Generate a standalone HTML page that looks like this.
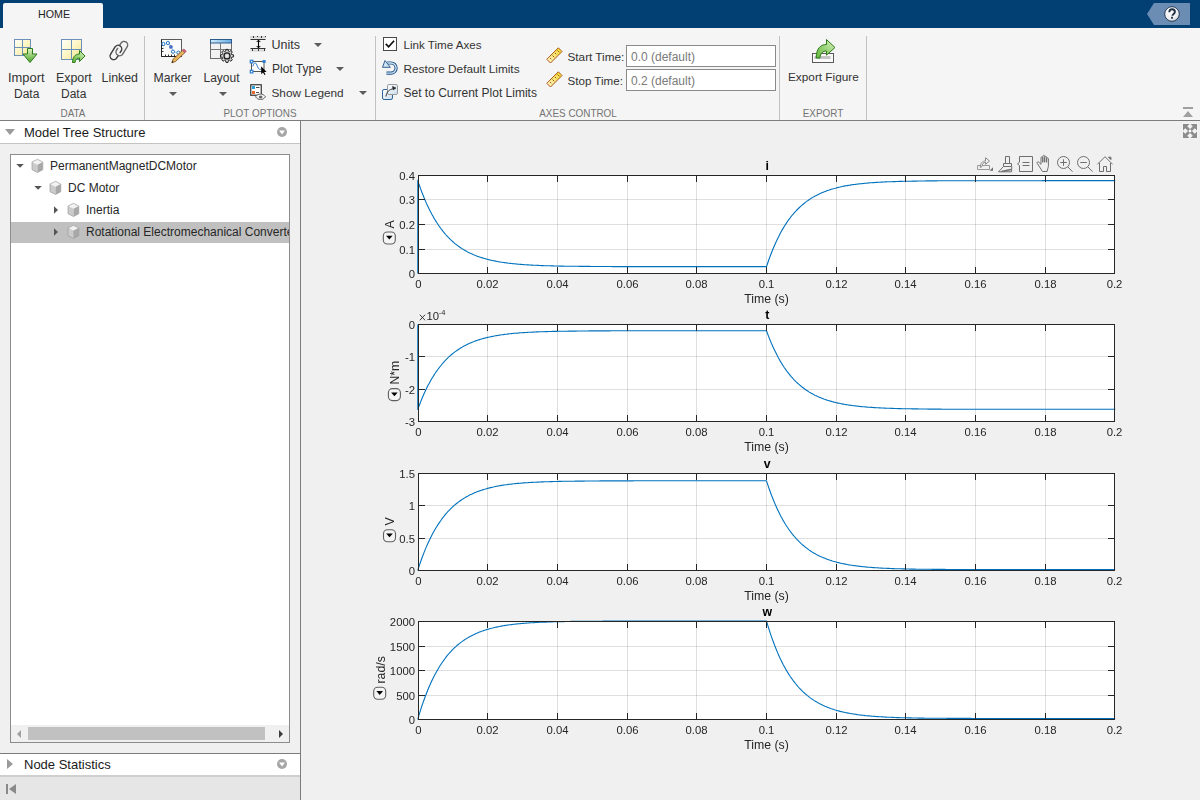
<!DOCTYPE html>
<html><head><meta charset="utf-8">
<style>
*{box-sizing:border-box}
html,body{margin:0;padding:0}
body{width:1200px;height:800px;overflow:hidden;position:relative;background:#f0f0f0;font-family:"Liberation Sans",sans-serif;color:#1a1a1a}
.a{position:absolute}
.t{position:absolute;white-space:nowrap;line-height:1}
#topbar{left:0;top:0;width:1200px;height:28px;background:#023f73}
#tab{left:3px;top:3px;width:100px;height:25px;background:#f5f5f5;border-radius:2px 2px 0 0}
#ribbon{left:0;top:28px;width:1200px;height:92px;background:#f5f5f5}
#ribline{left:0;top:120px;width:1200px;height:1px;background:#7c7c7c}
.sep{position:absolute;top:36px;width:1px;height:84px;background:#c2c2c2}
.rt{font-size:12px;color:#333}
.gl{font-size:11px;color:#737373;transform:translateX(-50%) scaleX(0.9)}
.dd{position:absolute;width:0;height:0;border-left:4px solid transparent;border-right:4px solid transparent;border-top:4px solid #5c5c5c}
svg text{font-family:"Liberation Sans",sans-serif}
.tl{font-size:11.3px;fill:#262626}
.xl{font-size:12.3px;fill:#262626}
.tt{font-size:12.3px;font-weight:bold;fill:#000}
</style></head><body>
<div class="a" id="topbar"></div>
<div class="a" id="tab"></div>
<div class="t" style="left:38px;top:9px;font-size:11px;color:#222;transform:scaleX(0.97);transform-origin:0 0">HOME</div>
<!-- help -->
<svg class="a" style="left:1140px;top:0" width="60" height="28">
 <defs><radialGradient id="hg" cx="0.4" cy="0.3" r="0.8"><stop offset="0" stop-color="#ffffff"/><stop offset="0.7" stop-color="#e9ecef"/><stop offset="1" stop-color="#aab4bf"/></radialGradient></defs>
 <path d="M7 14L14 3H50V25H14Z" fill="#6b8db3"/>
 <circle cx="32" cy="14" r="7.3" fill="url(#hg)" stroke="#1d3148" stroke-width="0.9"/>
 <path d="M29.3 12.2c0-1.9 1.2-3 2.8-3s2.8 1 2.8 2.6c0 1.2-.7 1.8-1.5 2.4-.6.4-.9.8-.9 1.6" fill="none" stroke="#1f2f45" stroke-width="1.9"/>
 <rect x="31.1" y="16.8" width="1.9" height="1.9" fill="#1f2f45"/>
</svg>
<div class="a" id="ribbon"></div>
<div class="a" id="ribline"></div>
<div class="sep" style="left:144px"></div>
<div class="sep" style="left:375px"></div>
<div class="sep" style="left:779px"></div>
<div class="sep" style="left:866px"></div>

<!-- DATA group -->
<svg class="a" style="left:0;top:0" width="1200" height="120">
 <defs>
  <linearGradient id="yel" x1="0" y1="0" x2="1" y2="1"><stop offset="0" stop-color="#ffffff"/><stop offset="0.5" stop-color="#fdf6c4"/><stop offset="1" stop-color="#f5e48a"/></linearGradient>
  <linearGradient id="grn" x1="0" y1="0" x2="0" y2="1"><stop offset="0" stop-color="#e2f5c8"/><stop offset="1" stop-color="#4aa526"/></linearGradient>
  <linearGradient id="grn2" x1="0" y1="1" x2="1" y2="0"><stop offset="0" stop-color="#5fb636"/><stop offset="1" stop-color="#d9f2c0"/></linearGradient>
  <linearGradient id="hdr" x1="0" y1="0" x2="1" y2="0"><stop offset="0" stop-color="#d2ecfc"/><stop offset="1" stop-color="#64a9e2"/></linearGradient>
  <linearGradient id="rul" x1="0" y1="1" x2="1" y2="0"><stop offset="0" stop-color="#fff8d0"/><stop offset="1" stop-color="#f2d820"/></linearGradient>
  <linearGradient id="bluebox" x1="0" y1="0" x2="1" y2="1"><stop offset="0" stop-color="#ffffff"/><stop offset="1" stop-color="#c9dcec"/></linearGradient>
 </defs>
 <!-- import data -->
 <rect x="14.5" y="39.5" width="16" height="16" fill="url(#yel)" stroke="#6d8fba"/>
 <path d="M22.5 39.5V55.5M14.5 47.5H30.5" stroke="#6d8fba"/>
 <path d="M27.5 48.5h5v5.5h4.5l-7 8.5-7-8.5h4.5z" fill="url(#grn)" stroke="#2d7a1a" stroke-width="1"/>
 <!-- export data -->
 <rect x="61.5" y="39.5" width="20" height="20" fill="url(#yel)" stroke="#6d8fba"/>
 <path d="M71.5 39.5V59.5M61.5 49.5H81.5" stroke="#6d8fba"/>
 <path d="M72.5 62.5c0-5 2.5-8.5 7-8.5v-3.5l5.5 5.5-5.5 5.5v-3.5c-2.5 0-4 1.5-4.5 4.5z" fill="url(#grn2)" stroke="#2d7a1a" stroke-width="1"/>
 <!-- linked -->
 <g fill="none" stroke-width="1.4" stroke-linecap="round">
  <path transform="translate(113.7,56) rotate(-58)" d="M2.2 3.6H0A3.6 3.6 0 0 1 0 -3.6H8.4A3.6 3.6 0 0 1 8.4 3.6H6.3" stroke="#3a3a3a"/>
  <path transform="translate(119.6,52.1) rotate(-58)" d="M6.3 -3.6H8.4A3.6 3.6 0 0 1 8.4 3.6H0A3.6 3.6 0 0 1 0 -3.6H2.2" stroke="#666"/>
 </g>
 <!-- marker -->
 <rect x="161.5" y="39.5" width="20" height="17" fill="#fbfbfb" stroke="#5a5a5a"/>
 <path d="M161.5 39.5V56.5H181.5" fill="none" stroke="#222" stroke-width="1"/>
 <path d="M162 45.5h1.5M162 48.5h1.5M162 51.5h1.5M165.5 56v-1.5M168.5 56v-1.5M171.5 56v-1.5M174.5 56v-1.5" stroke="#222" stroke-width="0.9"/>
 <g fill="none" stroke="#1e78c8" stroke-width="1">
  <circle cx="163.4" cy="44" r="1.6"/><circle cx="167.9" cy="43" r="1.6"/><circle cx="173" cy="51.7" r="1.6"/><circle cx="178.4" cy="52.7" r="1.6"/>
  <path d="M169.3 44l1.2 2M172 48.5l0.6 1.6M174.6 52l2.2 0.4" stroke-width="0.7" stroke="#6aa0dc"/>
 </g>
 <circle cx="170.9" cy="46.9" r="1.9" fill="#4a6fc8"/>
 <path d="M171.8 62.8l1.3-3.6 9.5-9 2.4 2.3-9.5 9z" fill="#e9b461" stroke="#7a4a10" stroke-width="0.8"/>
 <path d="M182.6 50.2l1.3-1.2 2.4 2.3-1.3 1.2z" fill="#e0648e" stroke="#9a3050" stroke-width="0.6"/>
 <path d="M171.8 62.8l0.6-1.8 1.2 1.1z" fill="#111"/>
 <!-- layout -->
 <rect x="210.5" y="39.5" width="21" height="19" fill="#f2f2f2" stroke="#6a6a6a"/>
 <rect x="210.5" y="39.5" width="21" height="3.5" fill="url(#hdr)" stroke="#2c5a8a" stroke-width="1"/>
 <path d="M220.5 43V58.5M210.5 49.5H231.5" stroke="#777"/>
 <path d="M231.84 54.66L233.52 54.87L233.52 56.93L231.84 57.14L231.30 58.45L232.34 59.78L230.88 61.24L229.55 60.20L228.24 60.74L228.03 62.42L225.97 62.42L225.76 60.74L224.45 60.20L223.12 61.24L221.66 59.78L222.70 58.45L222.16 57.14L220.48 56.93L220.48 54.87L222.16 54.66L222.70 53.35L221.66 52.02L223.12 50.56L224.45 51.60L225.76 51.06L225.97 49.38L228.03 49.38L228.24 51.06L229.55 51.60L230.88 50.56L232.34 52.02L231.30 53.35Z" fill="#d8d8d8" stroke="#222" stroke-width="1"/>
 <circle cx="227" cy="55.9" r="3" fill="#cfcfcf" stroke="#1a1a1a" stroke-width="1.3"/>
 <circle cx="227" cy="55.9" r="1.5" fill="#e8e8e8"/>
 <!-- units -->
 <rect x="250" y="36" width="16" height="2.5" fill="#d5d5d5"/>
 <rect x="250.5" y="49.5" width="15" height="2" fill="#d5d5d5"/>
 <path d="M253.5 36v2M257.5 36v1M261.5 36v2M265.5 36v1" stroke="#222" stroke-width="0.9"/>
 <path d="M250.5 39.5h15M250.5 48.5h15" stroke="#333" stroke-width="1.2"/>
 <path d="M252.5 49v2M258.5 49v2M264.5 49v2" stroke="#222" stroke-width="0.9"/>
 <path d="M258.5 40v8" stroke="#000" stroke-width="1.1"/>
 <path d="M256 41.7h5l-2.5-1.7zM256 46.3h5l-2.5 1.7z" fill="#000"/>
 <!-- plot type -->
 <rect x="251.5" y="61.5" width="12.5" height="10" fill="#fff" stroke="#555"/>
 <path d="M252.8 66.3c1-3.5 2.5-4 3.5-2.5s1.5 5 3.2 5.5c1 .3 1.8-.5 2.3-1" fill="none" stroke="#2a74c8" stroke-width="1"/>
 <rect x="250.3" y="60.3" width="2.6" height="2.6" fill="#fff" stroke="#2a7fd4" stroke-width="1.2"/>
 <rect x="262.6" y="60" width="3" height="3" fill="#2a7fd4"/>
 <rect x="250.3" y="70.3" width="2.6" height="2.6" fill="#fff" stroke="#2a7fd4" stroke-width="1.2"/>
 <path d="M261.2 66.2v8l1.8-1.7 1.5 2.6 1-0.5-1.4-2.6h2.5z" fill="#000"/>
 <!-- show legend -->
 <rect x="250.75" y="84.75" width="10.5" height="10.5" fill="#fff" stroke="#333" stroke-width="1.2"/>
 <rect x="252" y="86" width="3" height="3" fill="#2aa0d8"/>
 <rect x="252" y="91" width="3" height="3" fill="#e8692c"/>
 <path d="M256 87.5h3.5M256 92.5h3" stroke="#333" stroke-width="0.9"/>
 <path d="M255.5 96.8c1.5-2 3-2.8 5-2.8s3.5 0.8 5 2.8c-1.5 2-3 2.7-5 2.7s-3.5-0.7-5-2.7z" fill="#f4f4f4" stroke="#555" stroke-width="0.9"/>
 <ellipse cx="260.6" cy="96.9" rx="1.8" ry="1.5" fill="#666"/>
 <!-- checkbox -->
 <rect x="383.5" y="37.5" width="13" height="13" fill="#fff" stroke="#4a4a4a"/>
 <path d="M385.8 43.8l2.8 3 5.5-6" fill="none" stroke="#111" stroke-width="1.7"/>
 <!-- restore -->
 <path d="M387 63H391A5.1 5.1 0 0 1 391 73.2H386.5" fill="none" stroke="#1f4f85" stroke-width="3.2"/>
 <path d="M387 63H391A5.1 5.1 0 0 1 391 73.2H386.5" fill="none" stroke="#cfe6f7" stroke-width="1.3"/>
 <path d="M385 60.5L382.5 67.3H390.3z" fill="#cfe6f7" stroke="#1f4f85" stroke-width="0.9" stroke-linejoin="round"/>
 <!-- set to current -->
 <rect x="382.5" y="89.5" width="10" height="10" rx="1.6" fill="url(#bluebox)" stroke="#2a5f98" stroke-width="1"/>
 <rect x="387.5" y="84.5" width="10" height="10" rx="1.6" fill="url(#bluebox)" stroke="#999" stroke-width="1"/>
 <path d="M386 96.5c0.5-4.5 3-7 7.5-7.8" fill="none" stroke="#333" stroke-width="1"/>
 <path d="M396 88l-3.5-1.6 0.8 3.4z" fill="#222" stroke="#222" stroke-width="0.6"/>
 <!-- rulers -->
 <g id="ruler">
  <path d="M546.8 59.3L558.3 47.8 562 51.5 550.5 63z" fill="url(#rul)" stroke="#a9561a" stroke-width="1"/>
  <path d="M550 58l1.3 1.3M552.5 55.5l1.8 1.8M555 53l1.3 1.3M557.5 50.5l1.8 1.8" stroke="#a9561a" stroke-width="1"/>
 </g>
 <use href="#ruler" x="0" y="24"/>
 <!-- export figure -->
 <rect x="812.5" y="53.5" width="21" height="9" fill="#fafafa" stroke="#5a5a5a"/>
 <rect x="814.5" y="56" width="16" height="3" fill="#c4c4c4"/>
 <path d="M816.2 58c0-9 4-13.5 10.3-13.5v-5l8.5 8-8.5 7.7v-4.2c-3.8 0-6.3 2.5-6.5 7z" fill="url(#grn2)" stroke="#2d7a1a" stroke-width="1" stroke-linejoin="round"/>
 <!-- collapse ribbon -->
 <path d="M1183 107h10v2h-10zM1183 117l5-6 5 6z" fill="#a0a0a0"/>
</svg>

<div class="t rt" style="left:8px;top:71.5px;font-size:12.9px">Import</div>
<div class="t rt" style="left:14px;top:88px;font-size:12px">Data</div>
<div class="t rt" style="left:56px;top:72px;font-size:12.4px">Export</div>
<div class="t rt" style="left:61px;top:88px;font-size:12px">Data</div>
<div class="t rt" style="left:101.5px;top:72px;font-size:12.4px">Linked</div>
<div class="t gl" style="left:72.5px;top:108px">DATA</div>
<div class="t rt" style="left:153.5px;top:72px;font-size:12.25px">Marker</div>
<div class="dd" style="left:169px;top:92px"></div>
<div class="t rt" style="left:203.5px;top:72px;font-size:12px">Layout</div>
<div class="dd" style="left:219px;top:92px"></div>
<div class="t rt" style="left:271.5px;top:39px;font-size:12.5px">Units</div>
<div class="dd" style="left:314px;top:43px"></div>
<div class="t rt" style="left:272px;top:63px">Plot Type</div>
<div class="dd" style="left:336px;top:67px"></div>
<div class="t rt" style="left:271.5px;top:88px;font-size:11.8px">Show Legend</div>
<div class="dd" style="left:359px;top:91px"></div>
<div class="t gl" style="left:260px;top:108px">PLOT OPTIONS</div>
<div class="t rt" style="left:403.5px;top:39px;font-size:11.6px">Link Time Axes</div>
<div class="t rt" style="left:403.5px;top:64px;font-size:11.8px">Restore Default Limits</div>
<div class="t rt" style="left:403.5px;top:87px">Set to Current Plot Limits</div>
<div class="t rt" style="left:567.5px;top:51px;font-size:11.75px">Start Time:</div>
<div class="t rt" style="left:567.5px;top:75px;font-size:11.6px">Stop Time:</div>
<div class="a" style="left:626px;top:45px;width:150px;height:22px;border:1px solid #8a8a8a;background:#fff"></div>
<div class="a" style="left:626px;top:69px;width:150px;height:22px;border:1px solid #8a8a8a;background:#fff"></div>
<div class="t rt" style="left:631px;top:51px;color:#7a7a7a">0.0 (default)</div>
<div class="t rt" style="left:631px;top:75px;color:#7a7a7a">0.2 (default)</div>
<div class="t gl" style="left:577.7px;top:108px">AXES CONTROL</div>
<div class="t rt" style="left:788px;top:72px;font-size:11.8px">Export Figure</div>
<div class="t gl" style="left:823px;top:108px">EXPORT</div>

<!-- left panel -->
<div class="a" style="left:0;top:121px;width:300px;height:22px;background:#fff"></div>
<div class="a" style="left:0;top:143px;width:300px;height:1px;background:#c4c4c4"></div>
<div class="a" style="left:5px;top:129px;width:0;height:0;border-left:5px solid transparent;border-right:5px solid transparent;border-top:6px solid #9a9a9a"></div>
<div class="t" style="left:24px;top:126px;font-size:13px;color:#1a1a1a">Model Tree Structure</div>
<svg class="a" style="left:276px;top:126px" width="12" height="12"><circle cx="6" cy="6" r="5" fill="#a6a6a6"/><path d="M3 4.5h6l-3 4z" fill="#fff"/></svg>

<div class="a" style="left:10px;top:154px;width:280px;height:589px;border:1px solid #8c8c8c;background:#fff;overflow:hidden">
 <div class="a" style="left:0;top:67px;width:278px;height:21px;background:#c0c0c0"></div>
 <div class="a" style="left:0;top:570px;width:278px;height:17px;background:#f0f0f0"></div>
 <div class="a" style="left:17px;top:572px;width:237px;height:13px;background:#c1c1c1"></div>
</div>
<svg class="a" style="left:0;top:150px" width="300" height="600">
 <path d="M16.3 14h7.5l-3.75 3.8z" fill="#555"/>
 <path d="M34.3 36h7.5l-3.75 3.8z" fill="#555"/>
 <path d="M54 56.25v7.5l4-3.75z" fill="#555"/>
 <path d="M54 78.25v7.5l4-3.75z" fill="#555"/>
 <path d="M21 580v8l-4-4z" fill="#a0a0a0"/>
 <path d="M279 580v8l4-4z" fill="#3c3c3c"/>
 <g id="cube">
  <path d="M37.5 9.3L42.75 12 37.5 14.7 32 12z" fill="#f2f2f2"/>
  <path d="M32 12L37.5 14.7V22.5L32 19.7z" fill="#cbcbcb"/>
  <path d="M37.5 14.7L42.75 12V19.7L37.5 22.5z" fill="#a8a8a8"/>
  <path d="M37.5 9.3L42.75 12V19.7L37.5 22.5 32 19.7V12z" fill="none" stroke="#9c9c9c" stroke-width="0.7"/>
 </g>
 <use href="#cube" x="18" y="22"/>
 <use href="#cube" x="36" y="44"/>
 <use href="#cube" x="36" y="66"/>
</svg>
<div class="t" style="left:50px;top:160px;font-size:12px;color:#262626">PermanentMagnetDCMotor</div>
<div class="t" style="left:68px;top:182px;font-size:12px;color:#262626">DC Motor</div>
<div class="t" style="left:86px;top:204px;font-size:12px;color:#262626">Inertia</div>
<div class="a" style="left:86px;top:221px;width:203px;height:21px;overflow:hidden"><div class="t" style="left:0;top:5px;font-size:12px;color:#262626">Rotational Electromechanical Converter</div></div>

<div class="a" style="left:0;top:753px;width:300px;height:1px;background:#7c7c7c"></div>
<div class="a" style="left:0;top:754px;width:300px;height:21px;background:#fff"></div>
<div class="a" style="left:0;top:775px;width:300px;height:2px;background:#cfcfcf"></div>
<div class="a" style="left:0;top:777px;width:300px;height:23px;background:#e6e6e6"></div>
<div class="a" style="left:7px;top:759px;width:0;height:0;border-top:5px solid transparent;border-bottom:5px solid transparent;border-left:6px solid #9a9a9a"></div>
<div class="t" style="left:24px;top:757.5px;font-size:13px;color:#1a1a1a">Node Statistics</div>
<svg class="a" style="left:276px;top:758px" width="12" height="12"><circle cx="6" cy="6" r="5" fill="#a6a6a6"/><path d="M3 4.5h6l-3 4z" fill="#fff"/></svg>
<svg class="a" style="left:5px;top:783px" width="14" height="12"><rect x="1" y="1" width="2" height="10" fill="#8a8a8a"/><path d="M11 1v10l-7-5z" fill="#8a8a8a"/></svg>

<div class="a" style="left:300px;top:121px;width:1px;height:679px;background:#7c7c7c"></div>
<svg class="a" style="left:1182px;top:123px" width="16" height="16"><rect x="0" y="0" width="16" height="16" fill="#f3f3f3"/><g stroke="#8c8c8c" stroke-width="2.8"><path d="M3 3l10 10M13 3L3 13"/></g><path d="M1 1h6.5L1 7.5zM15 1H8.5L15 7.5zM1 15h6.5L1 8.5zM15 15H8.5L15 8.5z" fill="#8c8c8c"/><path d="M8 6.3L9.7 8 8 9.7 6.3 8z" fill="#fff"/></svg>

<svg class="a" style="left:0;top:0;will-change:transform" width="1200" height="800">
<rect x="418" y="175" width="697" height="99" fill="#fff"/>
<path d="M487.5 175V274M557.5 175V274M627.5 175V274M696.5 175V274M766.5 175V274M836.5 175V274M905.5 175V274M975.5 175V274M1045.5 175V274" stroke="#262626" stroke-opacity="0.15" stroke-width="1" fill="none"/>
<path d="M418 249.5H1115M418 224.5H1115M418 199.5H1115" stroke="#262626" stroke-opacity="0.15" stroke-width="1" fill="none"/>
<path d="M417.8,273.5 417.8,180.4 418.7,183.4 419.7,186.3 420.7,189.1 421.7,191.7 422.7,194.3 423.7,196.8 424.7,199.3 425.7,201.6 426.7,203.9 427.7,206.0 428.7,208.1 429.7,210.2 430.7,212.1 431.7,214.0 432.7,215.8 433.7,217.6 434.7,219.3 435.7,220.9 436.7,222.5 437.7,224.0 438.7,225.5 439.7,226.9 440.7,228.3 441.7,229.7 442.7,230.9 443.7,232.2 444.7,233.4 445.6,234.5 446.6,235.6 447.6,236.7 448.6,237.7 449.6,238.7 450.6,239.7 451.6,240.6 452.6,241.5 453.6,242.4 454.6,243.3 455.6,244.1 456.6,244.8 457.6,245.6 458.6,246.3 459.6,247.0 460.6,247.7 461.6,248.4 462.6,249.0 463.6,249.6 464.6,250.2 465.6,250.8 466.6,251.3 467.6,251.9 468.6,252.4 469.6,252.9 470.6,253.3 471.6,253.8 472.6,254.2 473.6,254.7 474.5,255.1 475.5,255.5 476.5,255.9 477.5,256.3 478.5,256.6 479.5,257.0 480.5,257.3 481.5,257.6 482.5,257.9 483.5,258.2 484.5,258.5 485.5,258.8 486.5,259.1 487.5,259.3 488.5,259.6 489.5,259.8 490.5,260.1 491.5,260.3 492.5,260.5 493.5,260.7 494.5,260.9 495.5,261.1 496.5,261.3 497.5,261.5 498.5,261.7 499.5,261.9 500.5,262.0 501.4,262.2 502.4,262.3 503.4,262.5 504.4,262.6 505.4,262.8 506.4,262.9 507.4,263.0 508.4,263.2 509.4,263.3 510.4,263.4 511.4,263.5 512.4,263.6 513.4,263.7 514.4,263.8 515.4,263.9 516.4,264.0 517.4,264.1 518.4,264.2 519.4,264.3 520.4,264.4 521.4,264.4 522.4,264.5 523.4,264.6 524.4,264.7 525.4,264.7 526.4,264.8 527.4,264.9 528.4,264.9 529.4,265.0 530.3,265.0 531.3,265.1 532.3,265.1 533.3,265.2 534.3,265.2 535.3,265.3 536.3,265.3 537.3,265.4 538.3,265.4 539.3,265.5 540.3,265.5 541.3,265.6 542.3,265.6 543.3,265.6 544.3,265.7 545.3,265.7 546.3,265.7 547.3,265.8 548.3,265.8 549.3,265.8 550.3,265.8 551.3,265.9 552.3,265.9 553.3,265.9 554.3,266.0 555.3,266.0 556.3,266.0 557.2,266.0 558.2,266.0 559.2,266.1 560.2,266.1 561.2,266.1 562.2,266.1 563.2,266.1 564.2,266.2 565.2,266.2 566.2,266.2 567.2,266.2 568.2,266.2 569.2,266.2 570.2,266.2 571.2,266.3 572.2,266.3 573.2,266.3 574.2,266.3 575.2,266.3 576.2,266.3 577.2,266.3 578.2,266.3 579.2,266.4 580.2,266.4 581.2,266.4 582.2,266.4 583.2,266.4 584.2,266.4 585.1,266.4 586.1,266.4 587.1,266.4 588.1,266.4 589.1,266.4 590.1,266.4 591.1,266.5 592.1,266.5 593.1,266.5 594.1,266.5 595.1,266.5 596.1,266.5 597.1,266.5 598.1,266.5 599.1,266.5 600.1,266.5 601.1,266.5 602.1,266.5 603.1,266.5 604.1,266.5 605.1,266.5 606.1,266.5 607.1,266.5 608.1,266.5 609.1,266.5 610.1,266.5 611.1,266.5 612.1,266.6 613.0,266.6 614.0,266.6 615.0,266.6 616.0,266.6 617.0,266.6 618.0,266.6 619.0,266.6 620.0,266.6 621.0,266.6 622.0,266.6 623.0,266.6 624.0,266.6 625.0,266.6 626.0,266.6 627.0,266.6 628.0,266.6 629.0,266.6 630.0,266.6 631.0,266.6 632.0,266.6 633.0,266.6 634.0,266.6 635.0,266.6 636.0,266.6 637.0,266.6 638.0,266.6 639.0,266.6 640.0,266.6 641.0,266.6 641.9,266.6 642.9,266.6 643.9,266.6 644.9,266.6 645.9,266.6 646.9,266.6 647.9,266.6 648.9,266.6 649.9,266.6 650.9,266.6 651.9,266.6 652.9,266.6 653.9,266.6 654.9,266.6 655.9,266.6 656.9,266.6 657.9,266.6 658.9,266.6 659.9,266.6 660.9,266.6 661.9,266.6 662.9,266.6 663.9,266.6 664.9,266.6 665.9,266.6 666.9,266.6 667.9,266.6 668.9,266.6 669.8,266.6 670.8,266.6 671.8,266.6 672.8,266.6 673.8,266.6 674.8,266.6 675.8,266.6 676.8,266.6 677.8,266.6 678.8,266.6 679.8,266.6 680.8,266.6 681.8,266.6 682.8,266.6 683.8,266.6 684.8,266.6 685.8,266.6 686.8,266.6 687.8,266.6 688.8,266.6 689.8,266.6 690.8,266.6 691.8,266.6 692.8,266.6 693.8,266.6 694.8,266.6 695.8,266.6 696.8,266.6 697.7,266.6 698.7,266.6 699.7,266.6 700.7,266.6 701.7,266.6 702.7,266.6 703.7,266.6 704.7,266.6 705.7,266.6 706.7,266.6 707.7,266.6 708.7,266.6 709.7,266.6 710.7,266.6 711.7,266.6 712.7,266.6 713.7,266.6 714.7,266.6 715.7,266.6 716.7,266.6 717.7,266.6 718.7,266.6 719.7,266.6 720.7,266.6 721.7,266.6 722.7,266.6 723.7,266.6 724.7,266.6 725.6,266.6 726.6,266.6 727.6,266.6 728.6,266.6 729.6,266.6 730.6,266.6 731.6,266.6 732.6,266.6 733.6,266.6 734.6,266.6 735.6,266.6 736.6,266.6 737.6,266.6 738.6,266.6 739.6,266.6 740.6,266.6 741.6,266.6 742.6,266.6 743.6,266.6 744.6,266.6 745.6,266.6 746.6,266.6 747.6,266.6 748.6,266.6 749.6,266.6 750.6,266.6 751.6,266.6 752.5,266.6 753.5,266.6 754.5,266.6 755.5,266.6 756.5,266.6 757.5,266.6 758.5,266.6 759.5,266.6 760.5,266.6 761.5,266.6 762.5,266.6 763.5,266.6 764.5,266.6 765.5,266.6 766.5,266.6 767.5,263.7 768.5,260.8 769.5,258.0 770.5,255.3 771.5,252.7 772.5,250.2 773.5,247.8 774.5,245.5 775.5,243.2 776.5,241.1 777.5,239.0 778.5,237.0 779.5,235.0 780.4,233.1 781.4,231.3 782.4,229.6 783.4,227.9 784.4,226.2 785.4,224.6 786.4,223.1 787.4,221.6 788.4,220.2 789.4,218.9 790.4,217.5 791.4,216.2 792.4,215.0 793.4,213.8 794.4,212.7 795.4,211.6 796.4,210.5 797.4,209.5 798.4,208.5 799.4,207.5 800.4,206.6 801.4,205.7 802.4,204.8 803.4,204.0 804.4,203.2 805.4,202.4 806.4,201.6 807.4,200.9 808.4,200.2 809.3,199.5 810.3,198.9 811.3,198.2 812.3,197.6 813.3,197.0 814.3,196.5 815.3,195.9 816.3,195.4 817.3,194.9 818.3,194.4 819.3,193.9 820.3,193.4 821.3,193.0 822.3,192.6 823.3,192.2 824.3,191.8 825.3,191.4 826.3,191.0 827.3,190.6 828.3,190.3 829.3,190.0 830.3,189.6 831.3,189.3 832.3,189.0 833.3,188.7 834.3,188.5 835.3,188.2 836.2,187.9 837.2,187.7 838.2,187.4 839.2,187.2 840.2,187.0 841.2,186.7 842.2,186.5 843.2,186.3 844.2,186.1 845.2,185.9 846.2,185.8 847.2,185.6 848.2,185.4 849.2,185.2 850.2,185.1 851.2,184.9 852.2,184.8 853.2,184.6 854.2,184.5 855.2,184.4 856.2,184.2 857.2,184.1 858.2,184.0 859.2,183.9 860.2,183.8 861.2,183.7 862.2,183.6 863.2,183.5 864.1,183.4 865.1,183.3 866.1,183.2 867.1,183.1 868.1,183.0 869.1,182.9 870.1,182.8 871.1,182.8 872.1,182.7 873.1,182.6 874.1,182.6 875.1,182.5 876.1,182.4 877.1,182.4 878.1,182.3 879.1,182.2 880.1,182.2 881.1,182.1 882.1,182.1 883.1,182.0 884.1,182.0 885.1,181.9 886.1,181.9 887.1,181.8 888.1,181.8 889.1,181.8 890.1,181.7 891.1,181.7 892.1,181.7 893.0,181.6 894.0,181.6 895.0,181.6 896.0,181.5 897.0,181.5 898.0,181.5 899.0,181.4 900.0,181.4 901.0,181.4 902.0,181.4 903.0,181.3 904.0,181.3 905.0,181.3 906.0,181.3 907.0,181.2 908.0,181.2 909.0,181.2 910.0,181.2 911.0,181.2 912.0,181.1 913.0,181.1 914.0,181.1 915.0,181.1 916.0,181.1 917.0,181.1 918.0,181.0 919.0,181.0 920.0,181.0 920.9,181.0 921.9,181.0 922.9,181.0 923.9,181.0 924.9,181.0 925.9,180.9 926.9,180.9 927.9,180.9 928.9,180.9 929.9,180.9 930.9,180.9 931.9,180.9 932.9,180.9 933.9,180.9 934.9,180.9 935.9,180.9 936.9,180.9 937.9,180.8 938.9,180.8 939.9,180.8 940.9,180.8 941.9,180.8 942.9,180.8 943.9,180.8 944.9,180.8 945.9,180.8 946.9,180.8 947.8,180.8 948.8,180.8 949.8,180.8 950.8,180.8 951.8,180.8 952.8,180.8 953.8,180.8 954.8,180.8 955.8,180.8 956.8,180.7 957.8,180.7 958.8,180.7 959.8,180.7 960.8,180.7 961.8,180.7 962.8,180.7 963.8,180.7 964.8,180.7 965.8,180.7 966.8,180.7 967.8,180.7 968.8,180.7 969.8,180.7 970.8,180.7 971.8,180.7 972.8,180.7 973.8,180.7 974.8,180.7 975.8,180.7 976.7,180.7 977.7,180.7 978.7,180.7 979.7,180.7 980.7,180.7 981.7,180.7 982.7,180.7 983.7,180.7 984.7,180.7 985.7,180.7 986.7,180.7 987.7,180.7 988.7,180.7 989.7,180.7 990.7,180.7 991.7,180.7 992.7,180.7 993.7,180.7 994.7,180.7 995.7,180.7 996.7,180.7 997.7,180.7 998.7,180.7 999.7,180.7 1000.7,180.7 1001.7,180.7 1002.7,180.7 1003.6,180.7 1004.6,180.7 1005.6,180.7 1006.6,180.7 1007.6,180.7 1008.6,180.7 1009.6,180.7 1010.6,180.7 1011.6,180.7 1012.6,180.7 1013.6,180.7 1014.6,180.7 1015.6,180.7 1016.6,180.7 1017.6,180.7 1018.6,180.7 1019.6,180.7 1020.6,180.7 1021.6,180.7 1022.6,180.7 1023.6,180.7 1024.6,180.7 1025.6,180.7 1026.6,180.7 1027.6,180.7 1028.6,180.7 1029.6,180.7 1030.6,180.7 1031.6,180.7 1032.5,180.7 1033.5,180.7 1034.5,180.7 1035.5,180.7 1036.5,180.7 1037.5,180.7 1038.5,180.7 1039.5,180.7 1040.5,180.7 1041.5,180.7 1042.5,180.6 1043.5,180.6 1044.5,180.6 1045.5,180.6 1046.5,180.6 1047.5,180.6 1048.5,180.6 1049.5,180.6 1050.5,180.6 1051.5,180.6 1052.5,180.6 1053.5,180.6 1054.5,180.6 1055.5,180.6 1056.5,180.6 1057.5,180.6 1058.5,180.6 1059.4,180.6 1060.4,180.6 1061.4,180.6 1062.4,180.6 1063.4,180.6 1064.4,180.6 1065.4,180.6 1066.4,180.6 1067.4,180.6 1068.4,180.6 1069.4,180.6 1070.4,180.6 1071.4,180.6 1072.4,180.6 1073.4,180.6 1074.4,180.6 1075.4,180.6 1076.4,180.6 1077.4,180.6 1078.4,180.6 1079.4,180.6 1080.4,180.6 1081.4,180.6 1082.4,180.6 1083.4,180.6 1084.4,180.6 1085.4,180.6 1086.4,180.6 1087.3,180.6 1088.3,180.6 1089.3,180.6 1090.3,180.6 1091.3,180.6 1092.3,180.6 1093.3,180.6 1094.3,180.6 1095.3,180.6 1096.3,180.6 1097.3,180.6 1098.3,180.6 1099.3,180.6 1100.3,180.6 1101.3,180.6 1102.3,180.6 1103.3,180.6 1104.3,180.6 1105.3,180.6 1106.3,180.6 1107.3,180.6 1108.3,180.6 1109.3,180.6 1110.3,180.6 1111.3,180.6 1112.3,180.6 1113.3,180.6 1114.3,180.6 1115.2,180.6" stroke="#0072bd" stroke-width="1.1" fill="none" stroke-linejoin="round"/>
<path d="M418.5 273v-6M418.5 176v6M487.5 273v-6M487.5 176v6M557.5 273v-6M557.5 176v6M627.5 273v-6M627.5 176v6M696.5 273v-6M696.5 176v6M766.5 273v-6M766.5 176v6M836.5 273v-6M836.5 176v6M905.5 273v-6M905.5 176v6M975.5 273v-6M975.5 176v6M1045.5 273v-6M1045.5 176v6M1114.5 273v-6M1114.5 176v6M419 273.5h6M1114 273.5h-6M419 249.5h6M1114 249.5h-6M419 224.5h6M1114 224.5h-6M419 199.5h6M1114 199.5h-6M419 175.5h6M1114 175.5h-6" stroke="#262626" stroke-width="1" fill="none"/>
<rect x="418.5" y="175.5" width="696" height="98" stroke="#262626" stroke-width="1" fill="none"/>
<text x="418.5" y="288" text-anchor="middle" class="tl">0</text>
<text x="487.5" y="288" text-anchor="middle" class="tl">0.02</text>
<text x="557.5" y="288" text-anchor="middle" class="tl">0.04</text>
<text x="627.5" y="288" text-anchor="middle" class="tl">0.06</text>
<text x="696.5" y="288" text-anchor="middle" class="tl">0.08</text>
<text x="766.5" y="288" text-anchor="middle" class="tl">0.1</text>
<text x="836.5" y="288" text-anchor="middle" class="tl">0.12</text>
<text x="905.5" y="288" text-anchor="middle" class="tl">0.14</text>
<text x="975.5" y="288" text-anchor="middle" class="tl">0.16</text>
<text x="1045.5" y="288" text-anchor="middle" class="tl">0.18</text>
<text x="1114.5" y="288" text-anchor="middle" class="tl">0.2</text>
<text x="415" y="277.5" text-anchor="end" class="tl">0</text>
<text x="415" y="253.5" text-anchor="end" class="tl">0.1</text>
<text x="415" y="228.5" text-anchor="end" class="tl">0.2</text>
<text x="415" y="203.5" text-anchor="end" class="tl">0.3</text>
<text x="415" y="179.5" text-anchor="end" class="tl">0.4</text>
<text x="766.5" y="303" text-anchor="middle" class="xl">Time (s)</text>
<text x="767.2" y="170" text-anchor="middle" class="tt">i</text>
<rect x="418" y="324" width="697" height="98" fill="#fff"/>
<path d="M487.5 324V422M557.5 324V422M627.5 324V422M696.5 324V422M766.5 324V422M836.5 324V422M905.5 324V422M975.5 324V422M1045.5 324V422" stroke="#262626" stroke-opacity="0.15" stroke-width="1" fill="none"/>
<path d="M418 389.5H1115M418 356.5H1115" stroke="#262626" stroke-opacity="0.15" stroke-width="1" fill="none"/>
<path d="M417.8,324.5 417.8,409.5 418.7,406.8 419.7,404.2 420.7,401.6 421.7,399.2 422.7,396.8 423.7,394.5 424.7,392.3 425.7,390.2 426.7,388.1 427.7,386.1 428.7,384.2 429.7,382.4 430.7,380.6 431.7,378.8 432.7,377.2 433.7,375.6 434.7,374.0 435.7,372.5 436.7,371.1 437.7,369.7 438.7,368.3 439.7,367.0 440.7,365.8 441.7,364.5 442.7,363.4 443.7,362.2 444.7,361.2 445.6,360.1 446.6,359.1 447.6,358.1 448.6,357.2 449.6,356.2 450.6,355.4 451.6,354.5 452.6,353.7 453.6,352.9 454.6,352.1 455.6,351.4 456.6,350.7 457.6,350.0 458.6,349.3 459.6,348.7 460.6,348.0 461.6,347.5 462.6,346.9 463.6,346.3 464.6,345.8 465.6,345.3 466.6,344.8 467.6,344.3 468.6,343.8 469.6,343.3 470.6,342.9 471.6,342.5 472.6,342.1 473.6,341.7 474.5,341.3 475.5,340.9 476.5,340.6 477.5,340.3 478.5,339.9 479.5,339.6 480.5,339.3 481.5,339.0 482.5,338.7 483.5,338.4 484.5,338.2 485.5,337.9 486.5,337.7 487.5,337.4 488.5,337.2 489.5,337.0 490.5,336.8 491.5,336.6 492.5,336.4 493.5,336.2 494.5,336.0 495.5,335.8 496.5,335.6 497.5,335.5 498.5,335.3 499.5,335.1 500.5,335.0 501.4,334.8 502.4,334.7 503.4,334.6 504.4,334.4 505.4,334.3 506.4,334.2 507.4,334.1 508.4,333.9 509.4,333.8 510.4,333.7 511.4,333.6 512.4,333.5 513.4,333.4 514.4,333.3 515.4,333.2 516.4,333.2 517.4,333.1 518.4,333.0 519.4,332.9 520.4,332.8 521.4,332.8 522.4,332.7 523.4,332.6 524.4,332.6 525.4,332.5 526.4,332.5 527.4,332.4 528.4,332.3 529.4,332.3 530.3,332.2 531.3,332.2 532.3,332.1 533.3,332.1 534.3,332.0 535.3,332.0 536.3,331.9 537.3,331.9 538.3,331.9 539.3,331.8 540.3,331.8 541.3,331.8 542.3,331.7 543.3,331.7 544.3,331.7 545.3,331.6 546.3,331.6 547.3,331.6 548.3,331.5 549.3,331.5 550.3,331.5 551.3,331.5 552.3,331.4 553.3,331.4 554.3,331.4 555.3,331.4 556.3,331.4 557.2,331.3 558.2,331.3 559.2,331.3 560.2,331.3 561.2,331.3 562.2,331.2 563.2,331.2 564.2,331.2 565.2,331.2 566.2,331.2 567.2,331.2 568.2,331.1 569.2,331.1 570.2,331.1 571.2,331.1 572.2,331.1 573.2,331.1 574.2,331.1 575.2,331.1 576.2,331.1 577.2,331.0 578.2,331.0 579.2,331.0 580.2,331.0 581.2,331.0 582.2,331.0 583.2,331.0 584.2,331.0 585.1,331.0 586.1,331.0 587.1,331.0 588.1,331.0 589.1,330.9 590.1,330.9 591.1,330.9 592.1,330.9 593.1,330.9 594.1,330.9 595.1,330.9 596.1,330.9 597.1,330.9 598.1,330.9 599.1,330.9 600.1,330.9 601.1,330.9 602.1,330.9 603.1,330.9 604.1,330.9 605.1,330.9 606.1,330.9 607.1,330.9 608.1,330.9 609.1,330.9 610.1,330.9 611.1,330.8 612.1,330.8 613.0,330.8 614.0,330.8 615.0,330.8 616.0,330.8 617.0,330.8 618.0,330.8 619.0,330.8 620.0,330.8 621.0,330.8 622.0,330.8 623.0,330.8 624.0,330.8 625.0,330.8 626.0,330.8 627.0,330.8 628.0,330.8 629.0,330.8 630.0,330.8 631.0,330.8 632.0,330.8 633.0,330.8 634.0,330.8 635.0,330.8 636.0,330.8 637.0,330.8 638.0,330.8 639.0,330.8 640.0,330.8 641.0,330.8 641.9,330.8 642.9,330.8 643.9,330.8 644.9,330.8 645.9,330.8 646.9,330.8 647.9,330.8 648.9,330.8 649.9,330.8 650.9,330.8 651.9,330.8 652.9,330.8 653.9,330.8 654.9,330.8 655.9,330.8 656.9,330.8 657.9,330.8 658.9,330.8 659.9,330.8 660.9,330.8 661.9,330.8 662.9,330.8 663.9,330.8 664.9,330.8 665.9,330.8 666.9,330.8 667.9,330.8 668.9,330.8 669.8,330.8 670.8,330.8 671.8,330.8 672.8,330.8 673.8,330.8 674.8,330.8 675.8,330.8 676.8,330.8 677.8,330.8 678.8,330.8 679.8,330.8 680.8,330.8 681.8,330.8 682.8,330.8 683.8,330.8 684.8,330.8 685.8,330.8 686.8,330.8 687.8,330.8 688.8,330.8 689.8,330.8 690.8,330.8 691.8,330.8 692.8,330.8 693.8,330.8 694.8,330.8 695.8,330.8 696.8,330.8 697.7,330.8 698.7,330.8 699.7,330.8 700.7,330.8 701.7,330.8 702.7,330.8 703.7,330.8 704.7,330.8 705.7,330.8 706.7,330.8 707.7,330.8 708.7,330.8 709.7,330.8 710.7,330.8 711.7,330.8 712.7,330.8 713.7,330.8 714.7,330.8 715.7,330.8 716.7,330.8 717.7,330.8 718.7,330.8 719.7,330.8 720.7,330.8 721.7,330.8 722.7,330.8 723.7,330.8 724.7,330.8 725.6,330.8 726.6,330.8 727.6,330.8 728.6,330.8 729.6,330.8 730.6,330.8 731.6,330.8 732.6,330.8 733.6,330.8 734.6,330.8 735.6,330.8 736.6,330.8 737.6,330.8 738.6,330.8 739.6,330.8 740.6,330.8 741.6,330.8 742.6,330.8 743.6,330.8 744.6,330.8 745.6,330.8 746.6,330.8 747.6,330.8 748.6,330.8 749.6,330.8 750.6,330.8 751.6,330.8 752.5,330.8 753.5,330.8 754.5,330.8 755.5,330.8 756.5,330.8 757.5,330.8 758.5,330.8 759.5,330.8 760.5,330.8 761.5,330.8 762.5,330.8 763.5,330.8 764.5,330.8 765.5,330.8 766.5,330.8 767.5,333.5 768.5,336.1 769.5,338.7 770.5,341.1 771.5,343.5 772.5,345.7 773.5,348.0 774.5,350.1 775.5,352.1 776.5,354.1 777.5,356.0 778.5,357.9 779.5,359.7 780.4,361.4 781.4,363.0 782.4,364.6 783.4,366.2 784.4,367.7 785.4,369.1 786.4,370.5 787.4,371.9 788.4,373.2 789.4,374.4 790.4,375.6 791.4,376.8 792.4,377.9 793.4,379.0 794.4,380.1 795.4,381.1 796.4,382.1 797.4,383.0 798.4,383.9 799.4,384.8 800.4,385.6 801.4,386.5 802.4,387.3 803.4,388.0 804.4,388.8 805.4,389.5 806.4,390.2 807.4,390.8 808.4,391.5 809.3,392.1 810.3,392.7 811.3,393.3 812.3,393.8 813.3,394.3 814.3,394.9 815.3,395.4 816.3,395.8 817.3,396.3 818.3,396.8 819.3,397.2 820.3,397.6 821.3,398.0 822.3,398.4 823.3,398.8 824.3,399.2 825.3,399.5 826.3,399.9 827.3,400.2 828.3,400.5 829.3,400.8 830.3,401.1 831.3,401.4 832.3,401.7 833.3,401.9 834.3,402.2 835.3,402.4 836.2,402.7 837.2,402.9 838.2,403.1 839.2,403.3 840.2,403.5 841.2,403.7 842.2,403.9 843.2,404.1 844.2,404.3 845.2,404.5 846.2,404.6 847.2,404.8 848.2,405.0 849.2,405.1 850.2,405.3 851.2,405.4 852.2,405.5 853.2,405.7 854.2,405.8 855.2,405.9 856.2,406.0 857.2,406.1 858.2,406.3 859.2,406.4 860.2,406.5 861.2,406.6 862.2,406.7 863.2,406.7 864.1,406.8 865.1,406.9 866.1,407.0 867.1,407.1 868.1,407.2 869.1,407.2 870.1,407.3 871.1,407.4 872.1,407.4 873.1,407.5 874.1,407.6 875.1,407.6 876.1,407.7 877.1,407.7 878.1,407.8 879.1,407.9 880.1,407.9 881.1,408.0 882.1,408.0 883.1,408.0 884.1,408.1 885.1,408.1 886.1,408.2 887.1,408.2 888.1,408.3 889.1,408.3 890.1,408.3 891.1,408.4 892.1,408.4 893.0,408.4 894.0,408.5 895.0,408.5 896.0,408.5 897.0,408.5 898.0,408.6 899.0,408.6 900.0,408.6 901.0,408.6 902.0,408.7 903.0,408.7 904.0,408.7 905.0,408.7 906.0,408.7 907.0,408.8 908.0,408.8 909.0,408.8 910.0,408.8 911.0,408.8 912.0,408.9 913.0,408.9 914.0,408.9 915.0,408.9 916.0,408.9 917.0,408.9 918.0,408.9 919.0,409.0 920.0,409.0 920.9,409.0 921.9,409.0 922.9,409.0 923.9,409.0 924.9,409.0 925.9,409.0 926.9,409.0 927.9,409.1 928.9,409.1 929.9,409.1 930.9,409.1 931.9,409.1 932.9,409.1 933.9,409.1 934.9,409.1 935.9,409.1 936.9,409.1 937.9,409.1 938.9,409.1 939.9,409.1 940.9,409.1 941.9,409.2 942.9,409.2 943.9,409.2 944.9,409.2 945.9,409.2 946.9,409.2 947.8,409.2 948.8,409.2 949.8,409.2 950.8,409.2 951.8,409.2 952.8,409.2 953.8,409.2 954.8,409.2 955.8,409.2 956.8,409.2 957.8,409.2 958.8,409.2 959.8,409.2 960.8,409.2 961.8,409.2 962.8,409.2 963.8,409.2 964.8,409.2 965.8,409.2 966.8,409.2 967.8,409.2 968.8,409.3 969.8,409.3 970.8,409.3 971.8,409.3 972.8,409.3 973.8,409.3 974.8,409.3 975.8,409.3 976.7,409.3 977.7,409.3 978.7,409.3 979.7,409.3 980.7,409.3 981.7,409.3 982.7,409.3 983.7,409.3 984.7,409.3 985.7,409.3 986.7,409.3 987.7,409.3 988.7,409.3 989.7,409.3 990.7,409.3 991.7,409.3 992.7,409.3 993.7,409.3 994.7,409.3 995.7,409.3 996.7,409.3 997.7,409.3 998.7,409.3 999.7,409.3 1000.7,409.3 1001.7,409.3 1002.7,409.3 1003.6,409.3 1004.6,409.3 1005.6,409.3 1006.6,409.3 1007.6,409.3 1008.6,409.3 1009.6,409.3 1010.6,409.3 1011.6,409.3 1012.6,409.3 1013.6,409.3 1014.6,409.3 1015.6,409.3 1016.6,409.3 1017.6,409.3 1018.6,409.3 1019.6,409.3 1020.6,409.3 1021.6,409.3 1022.6,409.3 1023.6,409.3 1024.6,409.3 1025.6,409.3 1026.6,409.3 1027.6,409.3 1028.6,409.3 1029.6,409.3 1030.6,409.3 1031.6,409.3 1032.5,409.3 1033.5,409.3 1034.5,409.3 1035.5,409.3 1036.5,409.3 1037.5,409.3 1038.5,409.3 1039.5,409.3 1040.5,409.3 1041.5,409.3 1042.5,409.3 1043.5,409.3 1044.5,409.3 1045.5,409.3 1046.5,409.3 1047.5,409.3 1048.5,409.3 1049.5,409.3 1050.5,409.3 1051.5,409.3 1052.5,409.3 1053.5,409.3 1054.5,409.3 1055.5,409.3 1056.5,409.3 1057.5,409.3 1058.5,409.3 1059.4,409.3 1060.4,409.3 1061.4,409.3 1062.4,409.3 1063.4,409.3 1064.4,409.3 1065.4,409.3 1066.4,409.3 1067.4,409.3 1068.4,409.3 1069.4,409.3 1070.4,409.3 1071.4,409.3 1072.4,409.3 1073.4,409.3 1074.4,409.3 1075.4,409.3 1076.4,409.3 1077.4,409.3 1078.4,409.3 1079.4,409.3 1080.4,409.3 1081.4,409.3 1082.4,409.3 1083.4,409.3 1084.4,409.3 1085.4,409.3 1086.4,409.3 1087.3,409.3 1088.3,409.3 1089.3,409.3 1090.3,409.3 1091.3,409.3 1092.3,409.3 1093.3,409.3 1094.3,409.3 1095.3,409.3 1096.3,409.3 1097.3,409.3 1098.3,409.3 1099.3,409.3 1100.3,409.3 1101.3,409.3 1102.3,409.3 1103.3,409.3 1104.3,409.3 1105.3,409.3 1106.3,409.3 1107.3,409.3 1108.3,409.3 1109.3,409.3 1110.3,409.3 1111.3,409.3 1112.3,409.3 1113.3,409.3 1114.3,409.3 1115.2,409.3" stroke="#0072bd" stroke-width="1.1" fill="none" stroke-linejoin="round"/>
<path d="M418.5 421v-6M418.5 325v6M487.5 421v-6M487.5 325v6M557.5 421v-6M557.5 325v6M627.5 421v-6M627.5 325v6M696.5 421v-6M696.5 325v6M766.5 421v-6M766.5 325v6M836.5 421v-6M836.5 325v6M905.5 421v-6M905.5 325v6M975.5 421v-6M975.5 325v6M1045.5 421v-6M1045.5 325v6M1114.5 421v-6M1114.5 325v6M419 421.5h6M1114 421.5h-6M419 389.5h6M1114 389.5h-6M419 356.5h6M1114 356.5h-6M419 324.5h6M1114 324.5h-6" stroke="#262626" stroke-width="1" fill="none"/>
<rect x="418.5" y="324.5" width="696" height="97" stroke="#262626" stroke-width="1" fill="none"/>
<text x="418.5" y="436" text-anchor="middle" class="tl">0</text>
<text x="487.5" y="436" text-anchor="middle" class="tl">0.02</text>
<text x="557.5" y="436" text-anchor="middle" class="tl">0.04</text>
<text x="627.5" y="436" text-anchor="middle" class="tl">0.06</text>
<text x="696.5" y="436" text-anchor="middle" class="tl">0.08</text>
<text x="766.5" y="436" text-anchor="middle" class="tl">0.1</text>
<text x="836.5" y="436" text-anchor="middle" class="tl">0.12</text>
<text x="905.5" y="436" text-anchor="middle" class="tl">0.14</text>
<text x="975.5" y="436" text-anchor="middle" class="tl">0.16</text>
<text x="1045.5" y="436" text-anchor="middle" class="tl">0.18</text>
<text x="1114.5" y="436" text-anchor="middle" class="tl">0.2</text>
<text x="415" y="425.5" text-anchor="end" class="tl">-3</text>
<text x="415" y="393.5" text-anchor="end" class="tl">-2</text>
<text x="415" y="360.5" text-anchor="end" class="tl">-1</text>
<text x="415" y="328.5" text-anchor="end" class="tl">0</text>
<text x="766.5" y="451" text-anchor="middle" class="xl">Time (s)</text>
<text x="767.2" y="319" text-anchor="middle" class="tt">t</text>
<path d="M419.8 314.7l5.3 5.6M425.1 314.7l-5.3 5.6" stroke="#262626" stroke-width="0.9"/>
<text x="426.5" y="320" class="tl">10</text>
<text x="438.8" y="315" font-size="7.5" fill="#262626">-4</text>
<rect x="418" y="473" width="697" height="98" fill="#fff"/>
<path d="M487.5 473V571M557.5 473V571M627.5 473V571M696.5 473V571M766.5 473V571M836.5 473V571M905.5 473V571M975.5 473V571M1045.5 473V571" stroke="#262626" stroke-opacity="0.15" stroke-width="1" fill="none"/>
<path d="M418 538.5H1115M418 505.5H1115" stroke="#262626" stroke-opacity="0.15" stroke-width="1" fill="none"/>
<path d="M417.8,570.5 418.7,567.4 419.7,564.4 420.7,561.5 421.7,558.7 422.7,556.0 423.7,553.4 424.7,550.9 425.7,548.4 426.7,546.1 427.7,543.8 428.7,541.7 429.7,539.5 430.7,537.5 431.7,535.5 432.7,533.6 433.7,531.8 434.7,530.0 435.7,528.3 436.7,526.7 437.7,525.1 438.7,523.6 439.7,522.1 440.7,520.7 441.7,519.3 442.7,517.9 443.7,516.7 444.7,515.4 445.6,514.2 446.6,513.1 447.6,511.9 448.6,510.9 449.6,509.8 450.6,508.8 451.6,507.8 452.6,506.9 453.6,506.0 454.6,505.1 455.6,504.3 456.6,503.5 457.6,502.7 458.6,501.9 459.6,501.2 460.6,500.5 461.6,499.8 462.6,499.1 463.6,498.5 464.6,497.9 465.6,497.3 466.6,496.7 467.6,496.2 468.6,495.6 469.6,495.1 470.6,494.6 471.6,494.2 472.6,493.7 473.6,493.2 474.5,492.8 475.5,492.4 476.5,492.0 477.5,491.6 478.5,491.2 479.5,490.9 480.5,490.5 481.5,490.2 482.5,489.9 483.5,489.6 484.5,489.2 485.5,489.0 486.5,488.7 487.5,488.4 488.5,488.1 489.5,487.9 490.5,487.6 491.5,487.4 492.5,487.2 493.5,487.0 494.5,486.7 495.5,486.5 496.5,486.3 497.5,486.1 498.5,486.0 499.5,485.8 500.5,485.6 501.4,485.4 502.4,485.3 503.4,485.1 504.4,485.0 505.4,484.8 506.4,484.7 507.4,484.6 508.4,484.4 509.4,484.3 510.4,484.2 511.4,484.1 512.4,484.0 513.4,483.8 514.4,483.7 515.4,483.6 516.4,483.5 517.4,483.4 518.4,483.4 519.4,483.3 520.4,483.2 521.4,483.1 522.4,483.0 523.4,482.9 524.4,482.9 525.4,482.8 526.4,482.7 527.4,482.7 528.4,482.6 529.4,482.5 530.3,482.5 531.3,482.4 532.3,482.4 533.3,482.3 534.3,482.3 535.3,482.2 536.3,482.2 537.3,482.1 538.3,482.1 539.3,482.0 540.3,482.0 541.3,481.9 542.3,481.9 543.3,481.9 544.3,481.8 545.3,481.8 546.3,481.8 547.3,481.7 548.3,481.7 549.3,481.7 550.3,481.6 551.3,481.6 552.3,481.6 553.3,481.5 554.3,481.5 555.3,481.5 556.3,481.5 557.2,481.5 558.2,481.4 559.2,481.4 560.2,481.4 561.2,481.4 562.2,481.3 563.2,481.3 564.2,481.3 565.2,481.3 566.2,481.3 567.2,481.3 568.2,481.2 569.2,481.2 570.2,481.2 571.2,481.2 572.2,481.2 573.2,481.2 574.2,481.2 575.2,481.1 576.2,481.1 577.2,481.1 578.2,481.1 579.2,481.1 580.2,481.1 581.2,481.1 582.2,481.1 583.2,481.1 584.2,481.1 585.1,481.0 586.1,481.0 587.1,481.0 588.1,481.0 589.1,481.0 590.1,481.0 591.1,481.0 592.1,481.0 593.1,481.0 594.1,481.0 595.1,481.0 596.1,481.0 597.1,481.0 598.1,481.0 599.1,481.0 600.1,480.9 601.1,480.9 602.1,480.9 603.1,480.9 604.1,480.9 605.1,480.9 606.1,480.9 607.1,480.9 608.1,480.9 609.1,480.9 610.1,480.9 611.1,480.9 612.1,480.9 613.0,480.9 614.0,480.9 615.0,480.9 616.0,480.9 617.0,480.9 618.0,480.9 619.0,480.9 620.0,480.9 621.0,480.9 622.0,480.9 623.0,480.9 624.0,480.9 625.0,480.9 626.0,480.9 627.0,480.9 628.0,480.9 629.0,480.9 630.0,480.9 631.0,480.9 632.0,480.9 633.0,480.9 634.0,480.8 635.0,480.8 636.0,480.8 637.0,480.8 638.0,480.8 639.0,480.8 640.0,480.8 641.0,480.8 641.9,480.8 642.9,480.8 643.9,480.8 644.9,480.8 645.9,480.8 646.9,480.8 647.9,480.8 648.9,480.8 649.9,480.8 650.9,480.8 651.9,480.8 652.9,480.8 653.9,480.8 654.9,480.8 655.9,480.8 656.9,480.8 657.9,480.8 658.9,480.8 659.9,480.8 660.9,480.8 661.9,480.8 662.9,480.8 663.9,480.8 664.9,480.8 665.9,480.8 666.9,480.8 667.9,480.8 668.9,480.8 669.8,480.8 670.8,480.8 671.8,480.8 672.8,480.8 673.8,480.8 674.8,480.8 675.8,480.8 676.8,480.8 677.8,480.8 678.8,480.8 679.8,480.8 680.8,480.8 681.8,480.8 682.8,480.8 683.8,480.8 684.8,480.8 685.8,480.8 686.8,480.8 687.8,480.8 688.8,480.8 689.8,480.8 690.8,480.8 691.8,480.8 692.8,480.8 693.8,480.8 694.8,480.8 695.8,480.8 696.8,480.8 697.7,480.8 698.7,480.8 699.7,480.8 700.7,480.8 701.7,480.8 702.7,480.8 703.7,480.8 704.7,480.8 705.7,480.8 706.7,480.8 707.7,480.8 708.7,480.8 709.7,480.8 710.7,480.8 711.7,480.8 712.7,480.8 713.7,480.8 714.7,480.8 715.7,480.8 716.7,480.8 717.7,480.8 718.7,480.8 719.7,480.8 720.7,480.8 721.7,480.8 722.7,480.8 723.7,480.8 724.7,480.8 725.6,480.8 726.6,480.8 727.6,480.8 728.6,480.8 729.6,480.8 730.6,480.8 731.6,480.8 732.6,480.8 733.6,480.8 734.6,480.8 735.6,480.8 736.6,480.8 737.6,480.8 738.6,480.8 739.6,480.8 740.6,480.8 741.6,480.8 742.6,480.8 743.6,480.8 744.6,480.8 745.6,480.8 746.6,480.8 747.6,480.8 748.6,480.8 749.6,480.8 750.6,480.8 751.6,480.8 752.5,480.8 753.5,480.8 754.5,480.8 755.5,480.8 756.5,480.8 757.5,480.8 758.5,480.8 759.5,480.8 760.5,480.8 761.5,480.8 762.5,480.8 763.5,480.8 764.5,480.8 765.5,480.8 766.5,480.8 767.5,483.9 768.5,486.9 769.5,489.7 770.5,492.5 771.5,495.2 772.5,497.7 773.5,500.2 774.5,502.6 775.5,505.0 776.5,507.2 777.5,509.4 778.5,511.5 779.5,513.5 780.4,515.4 781.4,517.3 782.4,519.1 783.4,520.9 784.4,522.5 785.4,524.2 786.4,525.8 787.4,527.3 788.4,528.7 789.4,530.2 790.4,531.5 791.4,532.8 792.4,534.1 793.4,535.3 794.4,536.5 795.4,537.7 796.4,538.8 797.4,539.9 798.4,540.9 799.4,541.9 800.4,542.8 801.4,543.8 802.4,544.7 803.4,545.5 804.4,546.4 805.4,547.2 806.4,547.9 807.4,548.7 808.4,549.4 809.3,550.1 810.3,550.8 811.3,551.5 812.3,552.1 813.3,552.7 814.3,553.3 815.3,553.8 816.3,554.4 817.3,554.9 818.3,555.4 819.3,555.9 820.3,556.4 821.3,556.8 822.3,557.3 823.3,557.7 824.3,558.1 825.3,558.5 826.3,558.9 827.3,559.3 828.3,559.6 829.3,560.0 830.3,560.3 831.3,560.6 832.3,561.0 833.3,561.3 834.3,561.5 835.3,561.8 836.2,562.1 837.2,562.4 838.2,562.6 839.2,562.8 840.2,563.1 841.2,563.3 842.2,563.5 843.2,563.7 844.2,563.9 845.2,564.1 846.2,564.3 847.2,564.5 848.2,564.7 849.2,564.9 850.2,565.0 851.2,565.2 852.2,565.3 853.2,565.5 854.2,565.6 855.2,565.8 856.2,565.9 857.2,566.0 858.2,566.1 859.2,566.3 860.2,566.4 861.2,566.5 862.2,566.6 863.2,566.7 864.1,566.8 865.1,566.9 866.1,567.0 867.1,567.1 868.1,567.2 869.1,567.3 870.1,567.3 871.1,567.4 872.1,567.5 873.1,567.6 874.1,567.6 875.1,567.7 876.1,567.8 877.1,567.8 878.1,567.9 879.1,568.0 880.1,568.0 881.1,568.1 882.1,568.1 883.1,568.2 884.1,568.2 885.1,568.3 886.1,568.3 887.1,568.4 888.1,568.4 889.1,568.4 890.1,568.5 891.1,568.5 892.1,568.6 893.0,568.6 894.0,568.6 895.0,568.7 896.0,568.7 897.0,568.7 898.0,568.8 899.0,568.8 900.0,568.8 901.0,568.8 902.0,568.9 903.0,568.9 904.0,568.9 905.0,568.9 906.0,569.0 907.0,569.0 908.0,569.0 909.0,569.0 910.0,569.1 911.0,569.1 912.0,569.1 913.0,569.1 914.0,569.1 915.0,569.1 916.0,569.2 917.0,569.2 918.0,569.2 919.0,569.2 920.0,569.2 920.9,569.2 921.9,569.2 922.9,569.3 923.9,569.3 924.9,569.3 925.9,569.3 926.9,569.3 927.9,569.3 928.9,569.3 929.9,569.3 930.9,569.3 931.9,569.4 932.9,569.4 933.9,569.4 934.9,569.4 935.9,569.4 936.9,569.4 937.9,569.4 938.9,569.4 939.9,569.4 940.9,569.4 941.9,569.4 942.9,569.4 943.9,569.4 944.9,569.4 945.9,569.5 946.9,569.5 947.8,569.5 948.8,569.5 949.8,569.5 950.8,569.5 951.8,569.5 952.8,569.5 953.8,569.5 954.8,569.5 955.8,569.5 956.8,569.5 957.8,569.5 958.8,569.5 959.8,569.5 960.8,569.5 961.8,569.5 962.8,569.5 963.8,569.5 964.8,569.5 965.8,569.5 966.8,569.5 967.8,569.5 968.8,569.5 969.8,569.5 970.8,569.5 971.8,569.5 972.8,569.5 973.8,569.5 974.8,569.6 975.8,569.6 976.7,569.6 977.7,569.6 978.7,569.6 979.7,569.6 980.7,569.6 981.7,569.6 982.7,569.6 983.7,569.6 984.7,569.6 985.7,569.6 986.7,569.6 987.7,569.6 988.7,569.6 989.7,569.6 990.7,569.6 991.7,569.6 992.7,569.6 993.7,569.6 994.7,569.6 995.7,569.6 996.7,569.6 997.7,569.6 998.7,569.6 999.7,569.6 1000.7,569.6 1001.7,569.6 1002.7,569.6 1003.6,569.6 1004.6,569.6 1005.6,569.6 1006.6,569.6 1007.6,569.6 1008.6,569.6 1009.6,569.6 1010.6,569.6 1011.6,569.6 1012.6,569.6 1013.6,569.6 1014.6,569.6 1015.6,569.6 1016.6,569.6 1017.6,569.6 1018.6,569.6 1019.6,569.6 1020.6,569.6 1021.6,569.6 1022.6,569.6 1023.6,569.6 1024.6,569.6 1025.6,569.6 1026.6,569.6 1027.6,569.6 1028.6,569.6 1029.6,569.6 1030.6,569.6 1031.6,569.6 1032.5,569.6 1033.5,569.6 1034.5,569.6 1035.5,569.6 1036.5,569.6 1037.5,569.6 1038.5,569.6 1039.5,569.6 1040.5,569.6 1041.5,569.6 1042.5,569.6 1043.5,569.6 1044.5,569.6 1045.5,569.6 1046.5,569.6 1047.5,569.6 1048.5,569.6 1049.5,569.6 1050.5,569.6 1051.5,569.6 1052.5,569.6 1053.5,569.6 1054.5,569.6 1055.5,569.6 1056.5,569.6 1057.5,569.6 1058.5,569.6 1059.4,569.6 1060.4,569.6 1061.4,569.6 1062.4,569.6 1063.4,569.6 1064.4,569.6 1065.4,569.6 1066.4,569.6 1067.4,569.6 1068.4,569.6 1069.4,569.6 1070.4,569.6 1071.4,569.6 1072.4,569.6 1073.4,569.6 1074.4,569.6 1075.4,569.6 1076.4,569.6 1077.4,569.6 1078.4,569.6 1079.4,569.6 1080.4,569.6 1081.4,569.6 1082.4,569.6 1083.4,569.6 1084.4,569.6 1085.4,569.6 1086.4,569.6 1087.3,569.6 1088.3,569.6 1089.3,569.6 1090.3,569.6 1091.3,569.6 1092.3,569.6 1093.3,569.6 1094.3,569.6 1095.3,569.6 1096.3,569.6 1097.3,569.6 1098.3,569.6 1099.3,569.6 1100.3,569.6 1101.3,569.6 1102.3,569.6 1103.3,569.6 1104.3,569.6 1105.3,569.6 1106.3,569.6 1107.3,569.6 1108.3,569.6 1109.3,569.6 1110.3,569.6 1111.3,569.6 1112.3,569.6 1113.3,569.6 1114.3,569.6 1115.2,569.6" stroke="#0072bd" stroke-width="1.1" fill="none" stroke-linejoin="round"/>
<path d="M418.5 570v-6M418.5 474v6M487.5 570v-6M487.5 474v6M557.5 570v-6M557.5 474v6M627.5 570v-6M627.5 474v6M696.5 570v-6M696.5 474v6M766.5 570v-6M766.5 474v6M836.5 570v-6M836.5 474v6M905.5 570v-6M905.5 474v6M975.5 570v-6M975.5 474v6M1045.5 570v-6M1045.5 474v6M1114.5 570v-6M1114.5 474v6M419 570.5h6M1114 570.5h-6M419 538.5h6M1114 538.5h-6M419 505.5h6M1114 505.5h-6M419 473.5h6M1114 473.5h-6" stroke="#262626" stroke-width="1" fill="none"/>
<rect x="418.5" y="473.5" width="696" height="97" stroke="#262626" stroke-width="1" fill="none"/>
<text x="418.5" y="585" text-anchor="middle" class="tl">0</text>
<text x="487.5" y="585" text-anchor="middle" class="tl">0.02</text>
<text x="557.5" y="585" text-anchor="middle" class="tl">0.04</text>
<text x="627.5" y="585" text-anchor="middle" class="tl">0.06</text>
<text x="696.5" y="585" text-anchor="middle" class="tl">0.08</text>
<text x="766.5" y="585" text-anchor="middle" class="tl">0.1</text>
<text x="836.5" y="585" text-anchor="middle" class="tl">0.12</text>
<text x="905.5" y="585" text-anchor="middle" class="tl">0.14</text>
<text x="975.5" y="585" text-anchor="middle" class="tl">0.16</text>
<text x="1045.5" y="585" text-anchor="middle" class="tl">0.18</text>
<text x="1114.5" y="585" text-anchor="middle" class="tl">0.2</text>
<text x="415" y="574.5" text-anchor="end" class="tl">0</text>
<text x="415" y="542.5" text-anchor="end" class="tl">0.5</text>
<text x="415" y="509.5" text-anchor="end" class="tl">1</text>
<text x="415" y="477.5" text-anchor="end" class="tl">1.5</text>
<text x="766.5" y="600" text-anchor="middle" class="xl">Time (s)</text>
<text x="767.2" y="468" text-anchor="middle" class="tt">v</text>
<rect x="418" y="621" width="697" height="99" fill="#fff"/>
<path d="M487.5 621V720M557.5 621V720M627.5 621V720M696.5 621V720M766.5 621V720M836.5 621V720M905.5 621V720M975.5 621V720M1045.5 621V720" stroke="#262626" stroke-opacity="0.15" stroke-width="1" fill="none"/>
<path d="M418 695.5H1115M418 670.5H1115M418 646.5H1115" stroke="#262626" stroke-opacity="0.15" stroke-width="1" fill="none"/>
<path d="M417.8,719.5 418.7,716.1 419.7,712.8 420.7,709.6 421.7,706.5 422.7,703.6 423.7,700.7 424.7,698.0 425.7,695.3 426.7,692.7 427.7,690.2 428.7,687.8 429.7,685.5 430.7,683.3 431.7,681.1 432.7,679.0 433.7,677.0 434.7,675.1 435.7,673.2 436.7,671.4 437.7,669.7 438.7,668.0 439.7,666.3 440.7,664.8 441.7,663.3 442.7,661.8 443.7,660.4 444.7,659.0 445.6,657.7 446.6,656.4 447.6,655.2 448.6,654.0 449.6,652.9 450.6,651.8 451.6,650.7 452.6,649.7 453.6,648.7 454.6,647.7 455.6,646.8 456.6,645.9 457.6,645.0 458.6,644.2 459.6,643.4 460.6,642.6 461.6,641.9 462.6,641.1 463.6,640.5 464.6,639.8 465.6,639.1 466.6,638.5 467.6,637.9 468.6,637.3 469.6,636.7 470.6,636.2 471.6,635.7 472.6,635.2 473.6,634.7 474.5,634.2 475.5,633.7 476.5,633.3 477.5,632.9 478.5,632.5 479.5,632.1 480.5,631.7 481.5,631.3 482.5,631.0 483.5,630.6 484.5,630.3 485.5,630.0 486.5,629.6 487.5,629.3 488.5,629.1 489.5,628.8 490.5,628.5 491.5,628.3 492.5,628.0 493.5,627.8 494.5,627.5 495.5,627.3 496.5,627.1 497.5,626.9 498.5,626.7 499.5,626.5 500.5,626.3 501.4,626.1 502.4,625.9 503.4,625.8 504.4,625.6 505.4,625.4 506.4,625.3 507.4,625.1 508.4,625.0 509.4,624.8 510.4,624.7 511.4,624.6 512.4,624.5 513.4,624.3 514.4,624.2 515.4,624.1 516.4,624.0 517.4,623.9 518.4,623.8 519.4,623.7 520.4,623.6 521.4,623.5 522.4,623.4 523.4,623.4 524.4,623.3 525.4,623.2 526.4,623.1 527.4,623.0 528.4,623.0 529.4,622.9 530.3,622.8 531.3,622.8 532.3,622.7 533.3,622.7 534.3,622.6 535.3,622.5 536.3,622.5 537.3,622.4 538.3,622.4 539.3,622.3 540.3,622.3 541.3,622.3 542.3,622.2 543.3,622.2 544.3,622.1 545.3,622.1 546.3,622.1 547.3,622.0 548.3,622.0 549.3,621.9 550.3,621.9 551.3,621.9 552.3,621.9 553.3,621.8 554.3,621.8 555.3,621.8 556.3,621.7 557.2,621.7 558.2,621.7 559.2,621.7 560.2,621.6 561.2,621.6 562.2,621.6 563.2,621.6 564.2,621.6 565.2,621.5 566.2,621.5 567.2,621.5 568.2,621.5 569.2,621.5 570.2,621.5 571.2,621.4 572.2,621.4 573.2,621.4 574.2,621.4 575.2,621.4 576.2,621.4 577.2,621.4 578.2,621.3 579.2,621.3 580.2,621.3 581.2,621.3 582.2,621.3 583.2,621.3 584.2,621.3 585.1,621.3 586.1,621.3 587.1,621.3 588.1,621.2 589.1,621.2 590.1,621.2 591.1,621.2 592.1,621.2 593.1,621.2 594.1,621.2 595.1,621.2 596.1,621.2 597.1,621.2 598.1,621.2 599.1,621.2 600.1,621.2 601.1,621.2 602.1,621.2 603.1,621.1 604.1,621.1 605.1,621.1 606.1,621.1 607.1,621.1 608.1,621.1 609.1,621.1 610.1,621.1 611.1,621.1 612.1,621.1 613.0,621.1 614.0,621.1 615.0,621.1 616.0,621.1 617.0,621.1 618.0,621.1 619.0,621.1 620.0,621.1 621.0,621.1 622.0,621.1 623.0,621.1 624.0,621.1 625.0,621.1 626.0,621.1 627.0,621.1 628.0,621.1 629.0,621.1 630.0,621.1 631.0,621.1 632.0,621.1 633.0,621.1 634.0,621.1 635.0,621.1 636.0,621.1 637.0,621.1 638.0,621.1 639.0,621.0 640.0,621.0 641.0,621.0 641.9,621.0 642.9,621.0 643.9,621.0 644.9,621.0 645.9,621.0 646.9,621.0 647.9,621.0 648.9,621.0 649.9,621.0 650.9,621.0 651.9,621.0 652.9,621.0 653.9,621.0 654.9,621.0 655.9,621.0 656.9,621.0 657.9,621.0 658.9,621.0 659.9,621.0 660.9,621.0 661.9,621.0 662.9,621.0 663.9,621.0 664.9,621.0 665.9,621.0 666.9,621.0 667.9,621.0 668.9,621.0 669.8,621.0 670.8,621.0 671.8,621.0 672.8,621.0 673.8,621.0 674.8,621.0 675.8,621.0 676.8,621.0 677.8,621.0 678.8,621.0 679.8,621.0 680.8,621.0 681.8,621.0 682.8,621.0 683.8,621.0 684.8,621.0 685.8,621.0 686.8,621.0 687.8,621.0 688.8,621.0 689.8,621.0 690.8,621.0 691.8,621.0 692.8,621.0 693.8,621.0 694.8,621.0 695.8,621.0 696.8,621.0 697.7,621.0 698.7,621.0 699.7,621.0 700.7,621.0 701.7,621.0 702.7,621.0 703.7,621.0 704.7,621.0 705.7,621.0 706.7,621.0 707.7,621.0 708.7,621.0 709.7,621.0 710.7,621.0 711.7,621.0 712.7,621.0 713.7,621.0 714.7,621.0 715.7,621.0 716.7,621.0 717.7,621.0 718.7,621.0 719.7,621.0 720.7,621.0 721.7,621.0 722.7,621.0 723.7,621.0 724.7,621.0 725.6,621.0 726.6,621.0 727.6,621.0 728.6,621.0 729.6,621.0 730.6,621.0 731.6,621.0 732.6,621.0 733.6,621.0 734.6,621.0 735.6,621.0 736.6,621.0 737.6,621.0 738.6,621.0 739.6,621.0 740.6,621.0 741.6,621.0 742.6,621.0 743.6,621.0 744.6,621.0 745.6,621.0 746.6,621.0 747.6,621.0 748.6,621.0 749.6,621.0 750.6,621.0 751.6,621.0 752.5,621.0 753.5,621.0 754.5,621.0 755.5,621.0 756.5,621.0 757.5,621.0 758.5,621.0 759.5,621.0 760.5,621.0 761.5,621.0 762.5,621.0 763.5,621.0 764.5,621.0 765.5,621.0 766.5,621.0 767.5,624.4 768.5,627.7 769.5,630.8 770.5,633.8 771.5,636.8 772.5,639.6 773.5,642.3 774.5,645.0 775.5,647.5 776.5,650.0 777.5,652.4 778.5,654.7 779.5,656.9 780.4,659.0 781.4,661.1 782.4,663.1 783.4,665.0 784.4,666.8 785.4,668.6 786.4,670.4 787.4,672.0 788.4,673.6 789.4,675.2 790.4,676.7 791.4,678.1 792.4,679.5 793.4,680.9 794.4,682.2 795.4,683.5 796.4,684.7 797.4,685.8 798.4,687.0 799.4,688.1 800.4,689.1 801.4,690.1 802.4,691.1 803.4,692.1 804.4,693.0 805.4,693.9 806.4,694.7 807.4,695.6 808.4,696.4 809.3,697.1 810.3,697.9 811.3,698.6 812.3,699.3 813.3,699.9 814.3,700.6 815.3,701.2 816.3,701.8 817.3,702.4 818.3,702.9 819.3,703.5 820.3,704.0 821.3,704.5 822.3,705.0 823.3,705.5 824.3,705.9 825.3,706.4 826.3,706.8 827.3,707.2 828.3,707.6 829.3,708.0 830.3,708.3 831.3,708.7 832.3,709.0 833.3,709.3 834.3,709.7 835.3,710.0 836.2,710.3 837.2,710.6 838.2,710.8 839.2,711.1 840.2,711.4 841.2,711.6 842.2,711.8 843.2,712.1 844.2,712.3 845.2,712.5 846.2,712.7 847.2,712.9 848.2,713.1 849.2,713.3 850.2,713.5 851.2,713.7 852.2,713.8 853.2,714.0 854.2,714.1 855.2,714.3 856.2,714.4 857.2,714.6 858.2,714.7 859.2,714.9 860.2,715.0 861.2,715.1 862.2,715.2 863.2,715.3 864.1,715.4 865.1,715.6 866.1,715.7 867.1,715.8 868.1,715.9 869.1,715.9 870.1,716.0 871.1,716.1 872.1,716.2 873.1,716.3 874.1,716.4 875.1,716.4 876.1,716.5 877.1,716.6 878.1,716.6 879.1,716.7 880.1,716.8 881.1,716.8 882.1,716.9 883.1,716.9 884.1,717.0 885.1,717.1 886.1,717.1 887.1,717.2 888.1,717.2 889.1,717.2 890.1,717.3 891.1,717.3 892.1,717.4 893.0,717.4 894.0,717.5 895.0,717.5 896.0,717.5 897.0,717.6 898.0,717.6 899.0,717.6 900.0,717.7 901.0,717.7 902.0,717.7 903.0,717.7 904.0,717.8 905.0,717.8 906.0,717.8 907.0,717.8 908.0,717.9 909.0,717.9 910.0,717.9 911.0,717.9 912.0,718.0 913.0,718.0 914.0,718.0 915.0,718.0 916.0,718.0 917.0,718.0 918.0,718.1 919.0,718.1 920.0,718.1 920.9,718.1 921.9,718.1 922.9,718.1 923.9,718.1 924.9,718.2 925.9,718.2 926.9,718.2 927.9,718.2 928.9,718.2 929.9,718.2 930.9,718.2 931.9,718.2 932.9,718.3 933.9,718.3 934.9,718.3 935.9,718.3 936.9,718.3 937.9,718.3 938.9,718.3 939.9,718.3 940.9,718.3 941.9,718.3 942.9,718.3 943.9,718.3 944.9,718.3 945.9,718.3 946.9,718.4 947.8,718.4 948.8,718.4 949.8,718.4 950.8,718.4 951.8,718.4 952.8,718.4 953.8,718.4 954.8,718.4 955.8,718.4 956.8,718.4 957.8,718.4 958.8,718.4 959.8,718.4 960.8,718.4 961.8,718.4 962.8,718.4 963.8,718.4 964.8,718.4 965.8,718.4 966.8,718.4 967.8,718.4 968.8,718.4 969.8,718.4 970.8,718.4 971.8,718.5 972.8,718.5 973.8,718.5 974.8,718.5 975.8,718.5 976.7,718.5 977.7,718.5 978.7,718.5 979.7,718.5 980.7,718.5 981.7,718.5 982.7,718.5 983.7,718.5 984.7,718.5 985.7,718.5 986.7,718.5 987.7,718.5 988.7,718.5 989.7,718.5 990.7,718.5 991.7,718.5 992.7,718.5 993.7,718.5 994.7,718.5 995.7,718.5 996.7,718.5 997.7,718.5 998.7,718.5 999.7,718.5 1000.7,718.5 1001.7,718.5 1002.7,718.5 1003.6,718.5 1004.6,718.5 1005.6,718.5 1006.6,718.5 1007.6,718.5 1008.6,718.5 1009.6,718.5 1010.6,718.5 1011.6,718.5 1012.6,718.5 1013.6,718.5 1014.6,718.5 1015.6,718.5 1016.6,718.5 1017.6,718.5 1018.6,718.5 1019.6,718.5 1020.6,718.5 1021.6,718.5 1022.6,718.5 1023.6,718.5 1024.6,718.5 1025.6,718.5 1026.6,718.5 1027.6,718.5 1028.6,718.5 1029.6,718.5 1030.6,718.5 1031.6,718.5 1032.5,718.5 1033.5,718.5 1034.5,718.5 1035.5,718.5 1036.5,718.5 1037.5,718.5 1038.5,718.5 1039.5,718.5 1040.5,718.5 1041.5,718.5 1042.5,718.5 1043.5,718.5 1044.5,718.5 1045.5,718.5 1046.5,718.5 1047.5,718.5 1048.5,718.5 1049.5,718.5 1050.5,718.5 1051.5,718.5 1052.5,718.5 1053.5,718.5 1054.5,718.5 1055.5,718.5 1056.5,718.5 1057.5,718.5 1058.5,718.5 1059.4,718.5 1060.4,718.5 1061.4,718.5 1062.4,718.5 1063.4,718.5 1064.4,718.5 1065.4,718.5 1066.4,718.5 1067.4,718.5 1068.4,718.5 1069.4,718.5 1070.4,718.5 1071.4,718.5 1072.4,718.5 1073.4,718.5 1074.4,718.5 1075.4,718.5 1076.4,718.5 1077.4,718.5 1078.4,718.5 1079.4,718.5 1080.4,718.5 1081.4,718.5 1082.4,718.5 1083.4,718.5 1084.4,718.5 1085.4,718.5 1086.4,718.5 1087.3,718.5 1088.3,718.5 1089.3,718.5 1090.3,718.5 1091.3,718.5 1092.3,718.5 1093.3,718.5 1094.3,718.5 1095.3,718.5 1096.3,718.5 1097.3,718.5 1098.3,718.5 1099.3,718.5 1100.3,718.5 1101.3,718.5 1102.3,718.5 1103.3,718.5 1104.3,718.5 1105.3,718.5 1106.3,718.5 1107.3,718.5 1108.3,718.5 1109.3,718.5 1110.3,718.5 1111.3,718.5 1112.3,718.5 1113.3,718.5 1114.3,718.5 1115.2,718.5" stroke="#0072bd" stroke-width="1.1" fill="none" stroke-linejoin="round"/>
<path d="M418.5 719v-6M418.5 622v6M487.5 719v-6M487.5 622v6M557.5 719v-6M557.5 622v6M627.5 719v-6M627.5 622v6M696.5 719v-6M696.5 622v6M766.5 719v-6M766.5 622v6M836.5 719v-6M836.5 622v6M905.5 719v-6M905.5 622v6M975.5 719v-6M975.5 622v6M1045.5 719v-6M1045.5 622v6M1114.5 719v-6M1114.5 622v6M419 719.5h6M1114 719.5h-6M419 695.5h6M1114 695.5h-6M419 670.5h6M1114 670.5h-6M419 646.5h6M1114 646.5h-6M419 621.5h6M1114 621.5h-6" stroke="#262626" stroke-width="1" fill="none"/>
<rect x="418.5" y="621.5" width="696" height="98" stroke="#262626" stroke-width="1" fill="none"/>
<text x="418.5" y="734" text-anchor="middle" class="tl">0</text>
<text x="487.5" y="734" text-anchor="middle" class="tl">0.02</text>
<text x="557.5" y="734" text-anchor="middle" class="tl">0.04</text>
<text x="627.5" y="734" text-anchor="middle" class="tl">0.06</text>
<text x="696.5" y="734" text-anchor="middle" class="tl">0.08</text>
<text x="766.5" y="734" text-anchor="middle" class="tl">0.1</text>
<text x="836.5" y="734" text-anchor="middle" class="tl">0.12</text>
<text x="905.5" y="734" text-anchor="middle" class="tl">0.14</text>
<text x="975.5" y="734" text-anchor="middle" class="tl">0.16</text>
<text x="1045.5" y="734" text-anchor="middle" class="tl">0.18</text>
<text x="1114.5" y="734" text-anchor="middle" class="tl">0.2</text>
<text x="415" y="723.5" text-anchor="end" class="tl">0</text>
<text x="415" y="699.5" text-anchor="end" class="tl">500</text>
<text x="415" y="674.5" text-anchor="end" class="tl">1000</text>
<text x="415" y="650.5" text-anchor="end" class="tl">1500</text>
<text x="415" y="625.5" text-anchor="end" class="tl">2000</text>
<text x="766.5" y="749" text-anchor="middle" class="xl">Time (s)</text>
<text x="767.2" y="616" text-anchor="middle" class="tt">w</text>
<text transform="translate(393.6,224.5) rotate(-90)" text-anchor="middle" class="xl">A</text>
<rect x="383.3" y="232" width="12" height="12" rx="4" fill="#f4f4f4" stroke="#606060" stroke-width="1.1"/>
<path d="M386.0 235.8h6.6l-3.3 3.8z" fill="#000"/>
<text transform="translate(399,372.6) rotate(-90)" text-anchor="middle" class="xl">N*m</text>
<rect x="388.4" y="388.6" width="12" height="12" rx="4" fill="#f4f4f4" stroke="#606060" stroke-width="1.1"/>
<path d="M391.09999999999997 392.40000000000003h6.6l-3.3 3.8z" fill="#000"/>
<text transform="translate(393.6,521.5) rotate(-90)" text-anchor="middle" class="xl">V</text>
<rect x="383.5" y="529.7" width="12" height="12" rx="4" fill="#f4f4f4" stroke="#606060" stroke-width="1.1"/>
<path d="M386.2 533.5h6.6l-3.3 3.8z" fill="#000"/>
<text transform="translate(384.6,669.8) rotate(-90)" text-anchor="middle" class="xl">rad/s</text>
<rect x="373.7" y="687.3" width="12" height="12" rx="4" fill="#f4f4f4" stroke="#606060" stroke-width="1.1"/>
<path d="M376.4 691.0999999999999h6.6l-3.3 3.8z" fill="#000"/>
<g stroke="#6e6e6e" fill="none" stroke-width="1" stroke-linejoin="round">
 <rect x="977.5" y="165.5" width="12" height="4" stroke="#9a9a9a"/>
 <path d="M980.3 167.5c0-4 2-6.5 5.2-6.5v-3.3l4 3.3-4 3.3v-2c-2 0-3.2 1.5-3.5 4.2z" fill="#f0f0f0" stroke="#8a8a8a"/>
 <path d="M989.5 170.8l3.5-3.5v3.5z" fill="#6e6e6e" stroke="none"/>
 <path d="M1005.5 163.5v-7h4v7M1003.5 163.5h8v3h-8zM1003.5 166.5l-5 5.3h13l0.3-5.3" />
 <path d="M1001.5 171.5l9.5-2" stroke-width="1.3"/>
 <path d="M1019.5 156.5h13v15h-13v-6l-2-1.7 2-1.7zM1022.5 162.5h7M1022.5 165.5h7"/>
 <path d="M1042.5 171.5l-5.3-8.2c-.6-1 .6-2 1.5-1.3l2.3 2.3v-6.5c0-1.3 1.8-1.3 1.8 0v4.5-6c0-1.3 1.9-1.3 1.9 0v6-5c0-1.3 1.9-1.3 1.9 0v5-3.5c0-1.3 1.8-1.3 1.8 0v7.5l-1.3 5.2z" />
 <circle cx="1063.5" cy="162.5" r="6"/><path d="M1067.8 166.8l4.7 4.9M1060.3 162.5h6.5M1063.5 159.3v6.5"/>
 <circle cx="1083.5" cy="162.5" r="6"/><path d="M1087.8 166.8l4.7 4.9M1080.3 162.5h6.5"/>
 <path d="M1097.4 164.3l7.6-7.6 7.6 7.6M1099.5 163v8.5h4v-5h3v5h4v-8.5"/>
 <path d="M1108.5 157.2h2.4v2.4z" fill="#6e6e6e"/>
</g>
</svg>
</body></html>
